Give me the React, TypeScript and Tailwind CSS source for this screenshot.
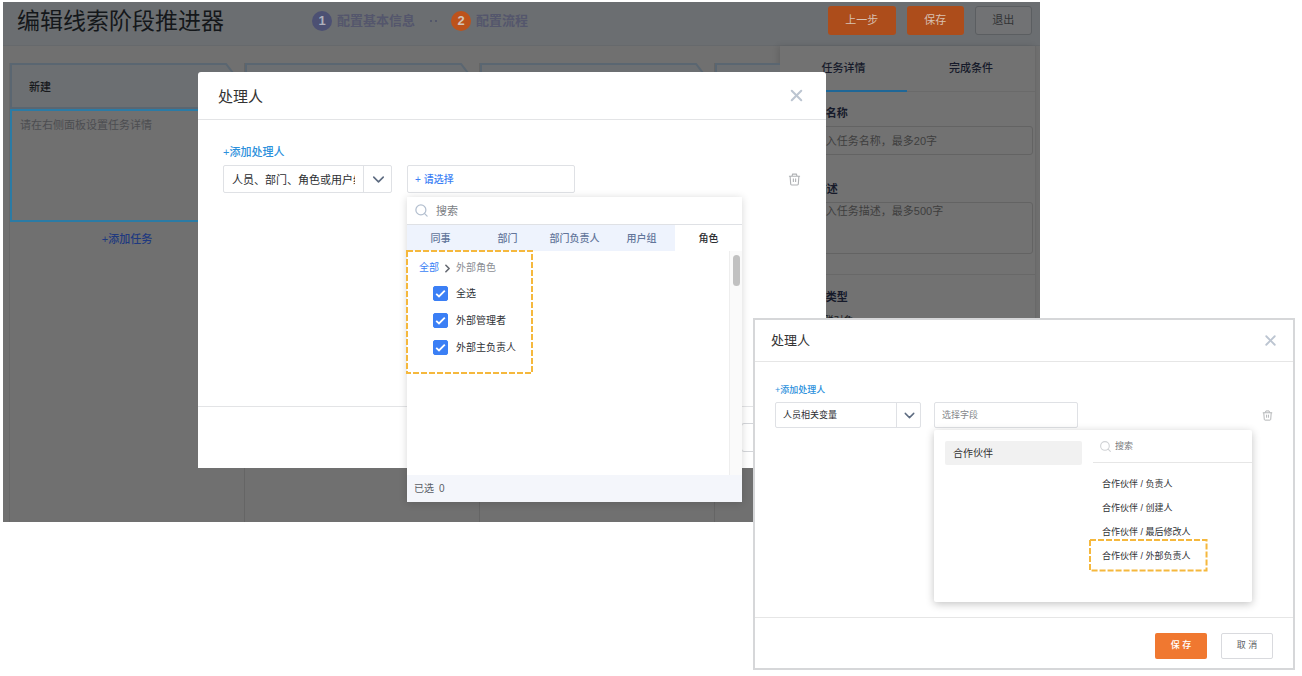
import React from 'react';
import { ChevronDown, ChevronRight, Search, X } from 'lucide-react';

function DashedFrame() {
  return (
    <svg className="pointer-events-none absolute inset-0 h-full w-full overflow-visible" aria-hidden="true">
      <rect width="100%" height="100%" fill="none" stroke="#f5b83d" strokeWidth="2" strokeDasharray="6 2" />
    </svg>
  );
}

function TrashIcon({ className }: { className: string }) {
  return (
    <svg className={className} viewBox="0 0 14 14" fill="none" stroke="currentColor" strokeWidth="1.2" aria-hidden="true">
      <path d="M1 3.5h12M4.3 3.2l.7-2h4l.7 2M2.3 3.8l.6 8.1c0 .6.4 1 1 1h6.2c.6 0 1-.4 1-1l.6-8.1M5.8 6v3.8M8.2 6v3.8" />
    </svg>
  );
}

function StageHeader({ title }: { title: string }) {
  return (
    <div className="relative flex h-[46px] items-center pt-[2px] pl-[19px]">
      <svg className="absolute inset-0 h-full w-full" viewBox="0 0 235 46" preserveAspectRatio="none" aria-hidden="true">
        <path d="M1 1H217L234 23L217 45H1Z" fill="#6c6f72" stroke="#5a6671" strokeWidth="2" />
      </svg>
      <h2 className="relative text-[11px] font-medium text-[#17191c]">{title}</h2>
    </div>
  );
}

function Step({ index, label, active }: { index: number; label: string; active?: boolean }) {
  return (
    <li className="flex items-center gap-[5px]">
      <span
        className={
          active
            ? 'flex size-5 items-center justify-center rounded-full bg-[#bd521b] text-[13px] font-bold text-[#d3c3b8]'
            : 'flex size-5 items-center justify-center rounded-full bg-[#4c5073] text-[13px] font-bold text-[#aeb0bc]'
        }
      >
        {index}
      </span>
      <span className="text-[13px] font-bold text-[#54566c]">{label}</span>
    </li>
  );
}

function Header() {
  return (
    <header className="flex h-11 items-center border-b border-[#66696c] bg-[#6b6e71] pr-2 pb-[6px] pl-[14px]">
      <h1 className="w-[295px] text-[23px] leading-8 text-[#14171a]">编辑线索阶段推进器</h1>
      <ol className="flex items-center">
        <Step index={1} label="配置基本信息" />
        <li aria-hidden="true" className="flex w-9 items-center justify-center gap-[3px]">
          <span className="size-[2px] rounded-full bg-[#4b5068]" />
          <span className="size-[2px] rounded-full bg-[#4b5068]" />
        </li>
        <Step index={2} label="配置流程" active />
      </ol>
      <div className="ml-auto flex gap-[11px] text-[11px]">
        <button type="button" className="h-[29px] w-[68px] rounded-[3px] bg-[#ad4d1b] text-[#d8c0b2]">上一步</button>
        <button type="button" className="h-[29px] w-[57px] rounded-[3px] bg-[#ad4d1b] text-[#d8c0b2]">保存</button>
        <button type="button" className="h-[29px] w-[57px] rounded-[3px] border border-[#5b5e61] bg-[#717274] text-[#313335]">退出</button>
      </div>
    </header>
  );
}

function Board() {
  return (
    <div className="flex min-w-0 flex-1 overflow-hidden pt-[17px] pl-[6px]">
      <section className="w-[235px] shrink-0 border-l border-[#686868]">
        <StageHeader title="新建" />
        <div className="h-[113px] border-2 border-[#2b7ba5] px-2 py-[6px] text-[11px] leading-4 text-[#4c4d50]">
          请在右侧面板设置任务详情
        </div>
        <button type="button" className="mt-[9px] block w-full text-center text-[11px] leading-4 font-medium text-[#20397f]">
          +添加任务
        </button>
      </section>
      {['跟进', '洽谈', '成交'].map((stage) => (
        <section key={stage} className="w-[235px] shrink-0 border-l border-[#656565]">
          <StageHeader title={stage} />
        </section>
      ))}
    </div>
  );
}

function DetailPanel() {
  return (
    <aside className="mr-1 w-[256px] shrink-0 border-r border-[#696969] bg-[#727272] shadow-[-2px_0_6px_rgba(0,0,0,0.12)]">
      <div role="tablist" className="flex h-[46px] border-b border-[#6a6a6a] text-[11px] font-medium text-[#161a2a]">
        <button type="button" role="tab" aria-selected="true" className="-mb-px flex-1 border-b-2 border-[#1f6797]">任务详情</button>
        <button type="button" role="tab" aria-selected="false" className="flex-1">完成条件</button>
      </div>
      <form className="text-[11px]">
        <div className="border-b border-[#686868] pt-[13px] pr-[2px] pb-5 pl-[14px]">
          <label htmlFor="task-name" className="block leading-4 font-bold text-[#161a2a]">
            <span className="inline-block w-[10px] text-[#8a2b22]">*</span>任务名称
          </label>
          <input
            id="task-name"
            placeholder="请输入任务名称，最多20字"
            className="mt-[5px] block h-[29px] w-full rounded-[3px] border border-[#636363] bg-transparent px-[9px] placeholder:text-[#3e3e3e]"
          />
          <label htmlFor="task-desc" className="mt-[26px] block leading-4 font-bold text-[#161a2a]">任务描述</label>
          <textarea
            id="task-desc"
            placeholder="请输入任务描述，最多500字"
            className="mt-[5px] block h-[52px] w-full resize-none rounded-[3px] border border-[#636363] bg-transparent px-[9px] leading-4 placeholder:text-[#3e3e3e]"
          />
        </div>
        <div className="pt-[14px] pl-[14px]">
          <p className="leading-4 font-bold text-[#161a2a]">
            <span className="inline-block w-[10px] text-[#8a2b22]">*</span>任务类型
          </p>
          <label className="mt-2 flex items-center gap-2 text-[10px] leading-4 text-[#17191c]">
            <input type="radio" name="task-type" defaultChecked className="size-3" />
            关联对象
          </label>
        </div>
      </form>
    </aside>
  );
}

const roleTabs = ['同事', '部门', '部门负责人', '用户组', '角色'];
const roles = ['全选', '外部管理者', '外部主负责人'];

function RoleDropdown() {
  return (
    <div className="absolute top-full left-0 mt-1 w-[335px] bg-white text-[10px] shadow-[0_1px_8px_rgba(0,0,0,0.16)]">
      <label className="flex h-7 items-center border-b border-[#dfe1e5] pl-[7px]">
        <Search className="size-[15px] text-[#b3bfcf]" strokeWidth={2} aria-hidden="true" />
        <input placeholder="搜索" aria-label="搜索" className="ml-[7px] min-w-0 flex-1 pt-[2px] text-[11px] outline-none placeholder:text-[#7b7e84]" />
      </label>
      <div role="tablist" className="grid h-[26px] grid-cols-5 bg-[#eef3fd] font-medium text-[#62759a]">
        {roleTabs.map((tab) =>
          tab === '角色' ? (
            <button key={tab} type="button" role="tab" aria-selected="true" className="bg-white text-[#2b2d31]">{tab}</button>
          ) : (
            <button key={tab} type="button" role="tab" aria-selected="false">{tab}</button>
          ),
        )}
      </div>
      <div className="flex h-[224px] justify-between">
        <div className="relative h-[122px] w-[125px] pt-[9px] pl-3">
          <DashedFrame />
          <nav className="flex items-center leading-4">
            <a href="#all" className="text-[#3b7ff5]">全部</a>
            <ChevronRight className="mx-[2px] size-[13px] text-[#666a72]" strokeWidth={3} aria-hidden="true" />
            <span className="text-[#8b8e94]">外部角色</span>
          </nav>
          <ul className="mt-1 pl-[14px]">
            {roles.map((role) => (
              <li key={role}>
                <label className="flex h-[27px] items-center gap-2 text-[#2f3237]">
                  <span className="grid size-[15px]">
                    <input
                      type="checkbox"
                      defaultChecked
                      className="col-start-1 row-start-1 appearance-none rounded-[2px] border border-[#3b7ff5] checked:bg-[#3b7ff5]"
                    />
                    <svg viewBox="0 0 15 15" className="pointer-events-none col-start-1 row-start-1" fill="none" stroke="white" strokeWidth="1.8" aria-hidden="true">
                      <path d="M3.2 7.8l2.8 2.7 5.8-5.9" />
                    </svg>
                  </span>
                  {role}
                </label>
              </li>
            ))}
          </ul>
        </div>
        <div className="w-[13px] border-l border-[#eeeeee] bg-[#fafafa] pt-1 pl-[3px]">
          <div className="h-[31px] w-[7px] rounded-full bg-[#c1c1c1]" />
        </div>
      </div>
      <div className="flex h-[27px] items-center gap-[5px] bg-[#f4f6fb] pl-[7px] text-[#5a5e66]">
        <span>已选</span>
        <span>0</span>
      </div>
    </div>
  );
}

function HandlerDialog() {
  return (
    <section
      role="dialog"
      aria-labelledby="handler-title"
      className="absolute top-[72px] left-[198px] w-[628px] rounded-t-[3px] bg-white"
    >
      <div className="flex h-12 items-center justify-between border-b border-[#e3e4e6] px-5">
        <h2 id="handler-title" className="pt-[3px] text-[15px] text-[#333333]">处理人</h2>
        <button type="button" aria-label="关闭">
          <X className="size-[19px] text-[#bcc5d1]" strokeWidth={2.6} />
        </button>
      </div>
      <div className="h-[286px] px-[25px] pt-6">
        <button type="button" className="block text-[11px] leading-4 font-medium text-[#2b90dc]">+添加处理人</button>
        <div className="mt-[5px] flex items-center gap-[15px]">
          <div className="relative w-[169px]">
            <select aria-label="处理人来源" className="block h-7 w-full appearance-none rounded-[2px] border border-[#dfe1e5] bg-white pt-[2px] pr-[36px] pl-2 text-[11px] text-[#2b2d31]">
              <option>人员、部门、角色或用户组</option>
            </select>
            <span className="pointer-events-none absolute inset-y-0 right-0 flex w-[29px] items-center justify-center border-l border-[#dfe1e5]">
              <ChevronDown className="size-[19px] text-[#5d6b80]" strokeWidth={2} />
            </span>
          </div>
          <div className="relative">
            <button type="button" className="flex h-7 w-[168px] items-center gap-[3px] rounded-[2px] border border-[#dfe1e5] pl-[7px] text-[10px] font-medium text-[#3b7ff5]">
              <span>+</span>请选择
            </button>
            <RoleDropdown />
          </div>
          <button type="button" aria-label="删除" className="ml-auto text-[#b0b2b5]">
            <TrashIcon className="size-[13px]" />
          </button>
        </div>
      </div>
      <div className="flex h-[62px] items-center justify-end gap-4 border-t border-[#e3e4e6] pr-6 text-[11px]">
        <button type="button" className="h-[29px] w-[61px] rounded-[3px] bg-[#f07830] text-white">保 存</button>
        <button type="button" className="h-[29px] w-[61px] rounded-[3px] border border-[#d4d6da] text-[#606266]">取 消</button>
      </div>
    </section>
  );
}

const partnerFields = ['负责人', '创建人', '最后修改人', '外部负责人'];

function FieldDropdown() {
  return (
    <div className="absolute top-full left-0 mt-[2px] flex h-[172px] w-[318px] justify-between rounded-[2px] bg-white shadow-[0_2px_8px_rgba(0,0,0,0.24)]">
      <div className="w-[148px] pt-[11px] pl-[11px]">
        <button type="button" className="block h-6 w-full rounded-[2px] bg-[#f1f1f1] pl-2 text-left text-[10px] text-[#333333]">合作伙伴</button>
      </div>
      <div className="w-[159px]">
        <label className="flex h-[33px] items-center border-b border-[#e6e6e6] pl-[6px]">
          <Search className="size-[13px] text-[#d0d2d5]" strokeWidth={2} aria-hidden="true" />
          <input placeholder="搜索" aria-label="搜索" className="ml-[3px] min-w-0 flex-1 pt-[2px] text-[9px] outline-none placeholder:text-[#77797d]" />
        </label>
        <ul className="mt-[10px] pl-[9px] text-[9px] text-[#303236]">
          {partnerFields.map((field) => (
            <li key={field} className="flex h-6 items-center">
              <span className="relative">
                合作伙伴 / {field}
                {field === '外部负责人' && (
                  <span className="absolute -top-[10px] -right-4 -bottom-[7px] -left-3">
                    <DashedFrame />
                  </span>
                )}
              </span>
            </li>
          ))}
        </ul>
      </div>
    </div>
  );
}

function VariableDialog() {
  return (
    <section
      role="dialog"
      aria-labelledby="variable-title"
      className="absolute top-[318px] right-[7px] w-[542px] border-2 border-[#d6d7d9] bg-white"
    >
      <div className="flex h-[42px] items-center justify-between border-b border-[#e6e6e6] pr-[14px] pl-4">
        <h2 id="variable-title" className="text-[13px] text-[#333333]">处理人</h2>
        <button type="button" aria-label="关闭">
          <X className="size-[17px] text-[#bcc5d1]" strokeWidth={2.6} />
        </button>
      </div>
      <div className="h-[255px] px-5 pt-5">
        <button type="button" className="block text-[9px] leading-4 font-medium text-[#2b90dc]">+添加处理人</button>
        <div className="mt-1 flex items-center gap-[13px]">
          <div className="relative w-[146px]">
            <select aria-label="处理人来源" className="block h-[26px] w-full appearance-none rounded-[2px] border border-[#dfe1e5] bg-white pt-[2px] pr-7 pl-[7px] text-[9px] text-[#2b2d31]">
              <option>人员相关变量</option>
            </select>
            <span className="pointer-events-none absolute inset-y-0 right-0 flex w-[25px] items-center justify-center border-l border-[#dfe1e5]">
              <ChevronDown className="size-[17px] text-[#5d6b80]" strokeWidth={2} />
            </span>
          </div>
          <div className="relative">
            <input
              aria-label="选择字段"
              placeholder="选择字段"
              className="block h-[26px] w-[144px] rounded-[2px] border border-[#dfe1e5] px-[7px] text-[9px] placeholder:text-[#85878b]"
            />
            <FieldDropdown />
          </div>
          <button type="button" aria-label="删除" className="ml-auto text-[#b0b2b5]">
            <TrashIcon className="size-[11px]" />
          </button>
        </div>
      </div>
      <div className="flex h-[51px] items-center justify-end gap-[14px] border-t border-[#e6e6e6] pt-[6px] pr-5 text-[9px]">
        <button type="button" className="h-[26px] w-[52px] rounded-[2px] bg-[#f07830] font-medium text-white">保 存</button>
        <button type="button" className="h-[26px] w-[52px] rounded-[2px] border border-[#d9dade] text-[#606266]">取 消</button>
      </div>
    </section>
  );
}

export default function App() {
  return (
    <main className="relative min-h-screen bg-white px-[3px] pt-[2px] font-['Liberation_Sans','Noto_Sans_CJK_SC',sans-serif]">
      <div className="flex min-h-[520px] w-4/5 flex-col bg-[#707070]">
        <Header />
        <div className="flex flex-1">
          <Board />
          <DetailPanel />
        </div>
      </div>
      <HandlerDialog />
      <VariableDialog />
    </main>
  );
}
